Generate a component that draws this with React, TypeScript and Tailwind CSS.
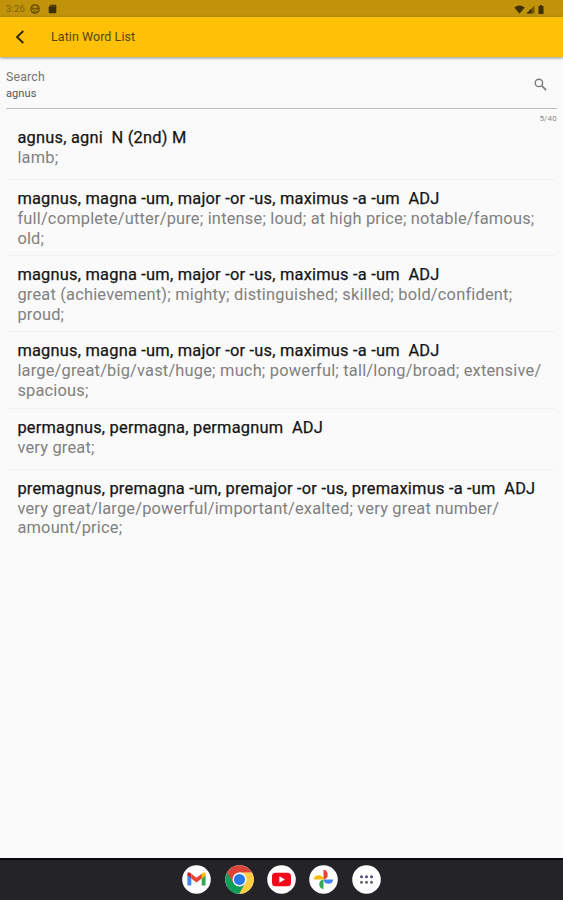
import React from "react";

type Entry = { title: string; lines: string[]; height: string };

const entries: Entry[] = [
  { title: "agnus, agni  N (2nd) M", lines: ["lamb;"], height: "h-[61px]" },
  {
    title: "magnus, magna -um, major -or -us, maximus -a -um  ADJ",
    lines: ["full/complete/utter/pure; intense; loud; at high price; notable/famous;", "old;"],
    height: "h-[76.2px]",
  },
  {
    title: "magnus, magna -um, major -or -us, maximus -a -um  ADJ",
    lines: ["great (achievement); mighty; distinguished; skilled; bold/confident;", "proud;"],
    height: "h-[76.2px]",
  },
  {
    title: "magnus, magna -um, major -or -us, maximus -a -um  ADJ",
    lines: ["large/great/big/vast/huge; much; powerful; tall/long/broad; extensive/", "spacious;"],
    height: "h-[76.2px]",
  },
  { title: "permagnus, permagna, permagnum  ADJ", lines: ["very great;"], height: "h-[61.2px]" },
  {
    title: "premagnus, premagna -um, premajor -or -us, premaximus -a -um  ADJ",
    lines: ["very great/large/powerful/important/exalted; very great number/", "amount/price;"],
    height: "h-[76px]",
  },
];

function StatusBar() {
  return (
    <div className="flex h-[17px] shrink-0 items-center bg-[#c0930a] pl-[6px] pr-[18px] pt-px text-[#5c4709]">
      <span className="w-[24px] text-[9.5px] leading-none tracking-[0.2px] text-[#80620a]">3:26</span>
      <svg className="h-[10px] w-[10px]" viewBox="0 0 10 10" fill="none" stroke="currentColor">
        <circle cx="5" cy="5" r="4.2" strokeWidth="1.2" />
        <path d="M2.2 4h2v1.2h-2zM5.8 4h2v1.2h-2zM3.2 7.2h3.6" strokeWidth="0.9" />
      </svg>
      <svg className="ml-[8px] h-[10px] w-[9px] text-[#3d3008]" viewBox="0 0 9 10" fill="currentColor">
        <path d="M3 .7h4.6q.7 0 .7.7v7.2q0 .7-.7.7H1.4q-.7 0-.7-.7V3z" />
        <path d="M3.4 1.7v1.4M5 1.7v1.4M6.6 1.7v1.4" stroke="#92710a" strokeWidth=".6" />
      </svg>
      <div className="ml-auto flex items-center text-[#3f3107]">
        <svg className="h-[9px] w-[11px]" viewBox="0 0 11 9" fill="currentColor">
          <path d="M.3 2.5Q5.5-1.6 10.7 2.5L5.5 8.8z" />
        </svg>
        <svg className="ml-[1px] h-[9px] w-[9px]" viewBox="0 0 9 9">
          <path d="M8.5.5v8h-8z" fill="#74580a" />
          <path d="M5.5 3.5v5h-5z" fill="#3f3107" />
        </svg>
        <svg className="ml-[3px] h-[9px] w-[6px]" viewBox="0 0 6 9" fill="currentColor">
          <path d="M2 0h2v1h1.5v8h-5V1H2z" />
        </svg>
        <span className="w-px" />
      </div>
    </div>
  );
}

function AppBar() {
  return (
    <header className="relative flex h-[40px] shrink-0 items-center bg-[#ffc107] pl-[15px] shadow-[0_1px_3px_rgba(0,0,0,0.45)]">
      <svg className="h-[14px] w-[10px]" viewBox="0 0 10 14" fill="none" stroke="#2c2408" strokeWidth="1.8">
        <path d="M8.3 1L2 7l6.3 6" />
      </svg>
      <h1 className="ml-[26px] whitespace-nowrap pt-px text-[12.5px] leading-none tracking-[0.06px] text-[#57440c]">Latin Word List</h1>
    </header>
  );
}

function SearchField() {
  return (
    <div className="mx-[6px] h-[70px] shrink-0">
      <div className="flex h-[52px] items-center justify-between border-b border-[#bdbdbd] pr-[10px]">
        <div className="flex flex-col pt-[5px]">
          <label className="text-[12.3px] leading-[17px] tracking-[0.2px] text-[#747474]">Search</label>
          <span className="text-[11px] leading-[15px] tracking-[0.1px] text-[#555555]">agnus</span>
        </div>
        <svg className="mt-[4px] h-[13px] w-[13px]" viewBox="0 0 13 13" fill="none" stroke="#7b7b7b">
          <circle cx="4.9" cy="4.9" r="3.7" strokeWidth="1.4" />
          <path d="M7.7 7.7l4.4 4.4" strokeWidth="1.7" />
        </svg>
      </div>
      <div className="pt-[5px] text-right text-[8px] leading-[10px] tracking-[0.2px] text-[#898989]">5/40</div>
    </div>
  );
}

function WordRow({ entry }: { entry: Entry }) {
  return (
    <li className={`${entry.height} border-b border-[#f1f1f1] pl-[9.4px] pt-[9px] last:border-b-0`}>
      <div className="whitespace-pre text-[16.4px] leading-[20px] tracking-[0.22px] text-[#151515] [-webkit-text-stroke:0.25px_#151515]">{entry.title}</div>
      {entry.lines.map((line) => (
        <div key={line} className="whitespace-pre text-[16.4px] leading-[19.6px] tracking-[0.2px] text-[#808080]">{line}</div>
      ))}
    </li>
  );
}

function Disc({ children }: { children: React.ReactNode }) {
  return (
    <svg className="h-[29px] w-[29px]" viewBox="0 0 29 29">
      <circle cx="14.5" cy="14.5" r="14.3" fill="#ffffff" />
      {children}
    </svg>
  );
}

function Dock() {
  return (
    <nav className="flex h-[42px] shrink-0 items-center justify-center gap-[13.3px] border-t-2 border-[#09090b] bg-[#242428] pb-[2px]">
      <Disc>
        <path d="M5.4 9.6l3.9 3v7.8H6.6q-1.2 0-1.2-1.2z" fill="#4285f4" />
        <path d="M23.6 9.6l-3.9 3v7.8h2.7q1.2 0 1.2-1.2z" fill="#34a853" />
        <path d="M5.4 9.8V9q0-2.5 2.6-1.2l1.3 1v4.1l-3.9-2.7z" fill="#c5221f" />
        <path d="M19.7 8.8l1.3-1q2.6-1.3 2.6 1.2v1.7l-3.9 3z" fill="#fbbc04" />
        <path d="M9.3 8.8l5.2 3.9 5.2-3.9v4.8l-5.2 3.9-5.2-3.9z" fill="#ea4335" />
      </Disc>
      <Disc>
        <path d="M14.5 14.5L2.1 7.4a14.3 14.3 0 0 0 12.4 21.4l6-10.8z" fill="#0f9d58" />
        <path d="M14.5 7.6h12.5a14.3 14.3 0 0 1-12.5 21.2l6-10.8z" fill="#ffcd40" />
        <path d="M2.1 7.4a14.3 14.3 0 0 1 24.9.2H14.5l-6 10.5z" fill="#db4437" />
        <circle cx="14.5" cy="14.5" r="6.9" fill="#ffffff" />
        <circle cx="14.5" cy="14.5" r="5.6" fill="#2878e8" />
      </Disc>
      <Disc>
        <rect x="5" y="7.7" width="19" height="13.6" rx="3.6" fill="#f6081b" />
        <path d="M12.4 11.3v6.4l5.5-3.2z" fill="#ffffff" />
      </Disc>
      <Disc>
        <path d="M14.5 4.8a4.9 4.9 0 0 1 0 9.7z" fill="#ea4335" />
        <path d="M24.2 14.5a4.9 4.9 0 0 1-9.7 0z" fill="#4285f4" />
        <path d="M14.5 24.2a4.9 4.9 0 0 1 0-9.7z" fill="#34a853" />
        <path d="M4.8 14.5a4.9 4.9 0 0 1 9.7 0z" fill="#fbbc04" />
      </Disc>
      <Disc>
        <g fill="#4b4b80">
          <circle cx="9.5" cy="11.8" r="1.5" />
          <circle cx="14.5" cy="11.8" r="1.5" />
          <circle cx="19.5" cy="11.8" r="1.5" />
        </g>
        <g fill="#66666e">
          <circle cx="9.5" cy="17.2" r="1.5" />
          <circle cx="14.5" cy="17.2" r="1.5" />
          <circle cx="19.5" cy="17.2" r="1.5" />
        </g>
      </Disc>
    </nav>
  );
}

export default function App() {
  return (
    <div className="flex h-[900px] w-[563px] flex-col overflow-hidden bg-[#fafafa] font-[Roboto,sans-serif]">
      <StatusBar />
      <AppBar />
      <SearchField />
      <ul className="mx-[8px] -mt-[8px] flex-1">
        {entries.map((entry, i) => (
          <WordRow key={i} entry={entry} />
        ))}
      </ul>
      <Dock />
    </div>
  );
}
